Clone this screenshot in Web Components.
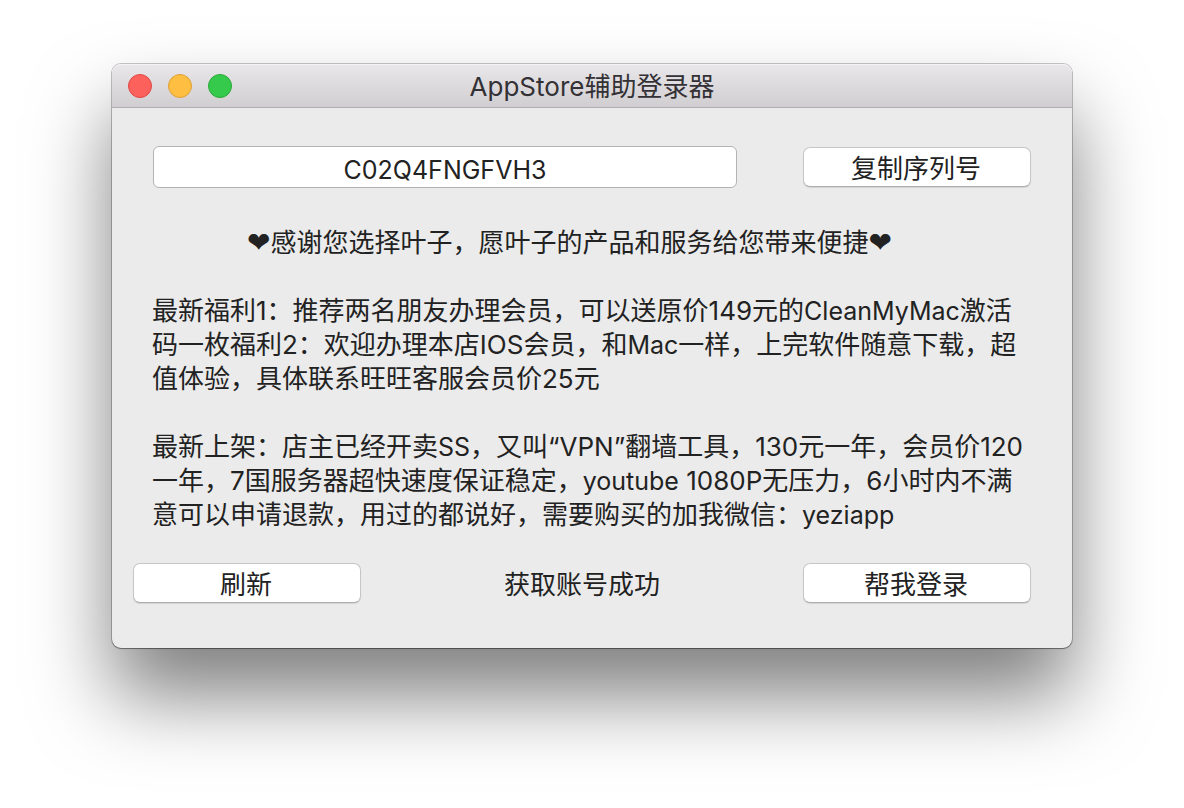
<!DOCTYPE html>
<html lang="zh-CN">
<head>
<meta charset="utf-8">
<title>AppStore辅助登录器</title>
<style>
  body {
    margin: 0;
    padding: 64px 112px 160px;
    background: #fff;
    color: #222;
    font: 26px/34px Inter, "Noto Sans CJK SC", sans-serif;
  }
</style>
</head>
<body>
<app-window>
  <span slot="title">AppStore辅助登录器</span>
  <serial-row value="C02Q4FNGFVH3"></serial-row>
  <notice-text></notice-text>
  <action-bar>
    <push-button slot="start">刷新</push-button>
    <span>获取账号成功</span>
    <push-button slot="end">帮我登录</push-button>
  </action-bar>
</app-window>

<script>
class BaseElement extends HTMLElement {
  constructor() {
    super();
    this.attachShadow({ mode: "open" }).innerHTML = this.constructor.markup;
  }
}

class TrafficLights extends BaseElement {
  static markup = `
    <style>
      :host { display: flex; gap: 16px; }
      button {
        width: 24px; height: 24px; padding: 0; box-sizing: border-box;
        border: 1px solid; border-radius: 50%;
      }
      .close { background: #fc615c; border-color: #e04744; }
      .minimize { background: #fdbe41; border-color: #dea038; }
      .zoom { background: #35ca4b; border-color: #2aa937; }
    </style>
    <button class="close" type="button" aria-label="关闭"></button>
    <button class="minimize" type="button" aria-label="最小化"></button>
    <button class="zoom" type="button" aria-label="缩放"></button>`;
}
customElements.define("traffic-lights", TrafficLights);

class AppWindow extends BaseElement {
  static markup = `
    <style>
      :host {
        display: block;
        border-radius: 9px;
        background: #ebebeb;
        box-shadow: 0 0 0 1px rgba(0,0,0,.22), 0 1px 1px rgba(0,0,0,.3), 0 48px 80px rgba(0,0,0,.5);
      }
      header {
        display: grid;
        grid-template-columns: 1fr auto 1fr;
        align-items: center;
        height: 44px;
        padding: 0 16px;
        box-sizing: border-box;
        border-bottom: 1px solid #b1afb1;
        border-radius: 9px 9px 0 0;
        background: linear-gradient(#e9e7e9, #d1ced1);
        box-shadow: inset 0 1px #f5f4f5;
      }
      h1 { margin: 0; padding-top: 2px; font: inherit; color: #333135; }
      main { padding: 38px 41px 45px 21px; }
    </style>
    <header>
      <traffic-lights></traffic-lights>
      <h1><slot name="title"></slot></h1>
    </header>
    <main><slot></slot></main>`;
}
customElements.define("app-window", AppWindow);

class PushButton extends BaseElement {
  static markup = `
    <style>
      :host { display: block; flex: 0 0 228px; }
      button {
        display: block; width: 100%; height: 40px; padding: 4px 2px 0 0;
        box-sizing: border-box;
        border: 1px solid #c6c6c6; border-bottom-color: #adadad;
        border-radius: 7px;
        background: #fff; color: inherit; font: inherit;
        box-shadow: 0 1px 1px rgba(0,0,0,.1);
      }
    </style>
    <button type="button"><slot></slot></button>`;
}
customElements.define("push-button", PushButton);

class SerialRow extends BaseElement {
  static markup = `
    <style>
      :host { display: flex; align-items: center; gap: 66px; padding-left: 20px; }
      input {
        flex: 1; min-width: 0; height: 42px; padding: 6px 8px 0;
        box-sizing: border-box;
        border: 1px solid #b3b3b3; border-radius: 6px;
        background: #fff; color: inherit; font: inherit; font-size: 25px; text-align: center;
      }
    </style>
    <input type="text" aria-label="序列号" spellcheck="false">
    <push-button>复制序列号</push-button>`;
  connectedCallback() {
    this.shadowRoot.querySelector("input").value = this.getAttribute("value");
  }
}
customElements.define("serial-row", SerialRow);

class NoticeText extends BaseElement {
  static markup = `
    <style>
      :host { display: block; padding: 38px 0 31px 19px; }
      p { margin: 0 0 34px; white-space: nowrap; }
      p:last-child { margin: 0; }
      .thanks { padding-right: 44px; text-align: center; }
      .heart { font-family: "DejaVu Sans", sans-serif; font-size: 28px; line-height: 1; }
      .latin { font-size: 25px; line-height: 1; }
    </style>
    <p class="thanks"><span class="heart">&#x2764;&#xFE0E;</span>感谢您选择叶子，愿叶子的产品和服务给您带来便捷<span class="heart">&#x2764;&#xFE0E;</span></p>
    <p>最新福利1：推荐两名朋友办理会员，可以送原价149元的<span class="latin">CleanMyMac</span>激活<br>码一枚福利2：欢迎办理本店IOS会员，和<span class="latin">Mac</span>一样，上完软件随意下载，超<br>值体验，具体联系旺旺客服会员价25元</p>
    <p>最新上架：店主已经开卖<span class="latin">SS</span>，又叫“VPN”翻墙工具，130元一年，会员价120<br>一年，7国服务器超快速度保证稳定，<span class="latin">youtube</span> 1080P无压力，6小时内不满<br>意可以申请退款，用过的都说好，需要购买的加我微信：<span class="latin">yeziapp</span></p>`;
}
customElements.define("notice-text", NoticeText);

class ActionBar extends BaseElement {
  static markup = `
    <style>
      :host { display: flex; align-items: center; justify-content: space-between; }
      .status { padding-top: 4px; }
    </style>
    <slot name="start"></slot>
    <div class="status" role="status"><slot></slot></div>
    <slot name="end"></slot>`;
}
customElements.define("action-bar", ActionBar);
</script>
</body>
</html>
